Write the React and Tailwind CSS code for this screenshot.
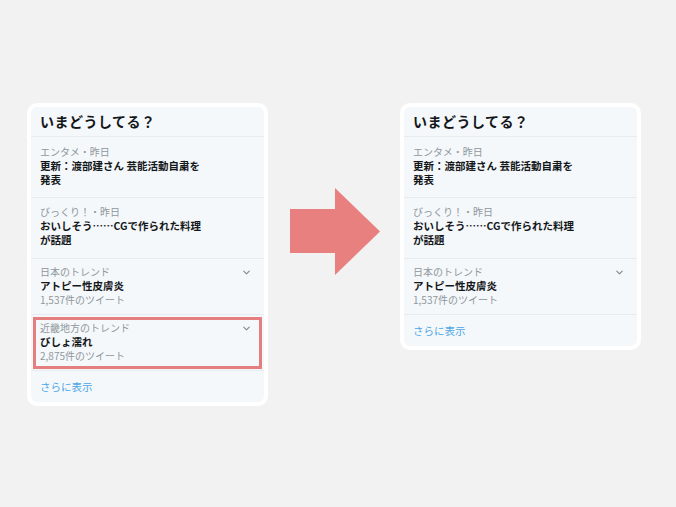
import { ChevronDown } from 'lucide-react'

const font = { fontFamily: '"Noto Sans CJK JP", "Noto Sans", sans-serif' }

function TrendItem({ category, title, count, chevron, pt = 'pt-[6px]', pb = 'pb-[7px]', boxed }) {
    return (
        <div className={`relative border-b border-[#e6ecf0] px-[9px] ${pt} ${pb}`}>
            <div className="flex items-center justify-between">
                <span className="text-[10px] leading-[14px] text-[#8f979e]">{category}</span>
                {chevron && <ChevronDown className="w-[11px] h-[11px] text-[#7f8991] mr-[3px]" strokeWidth={2.5} />}
            </div>
            <div className="text-[10.5px] leading-[14px] font-bold text-[#14171a]">{title}</div>
            {count && <div className="text-[10px] leading-[14px] text-[#8f979e]">{count}</div>}
            {boxed && (
                <div className="absolute left-[2px] right-[2px] top-[2px] bottom-[1px] border-[3px] border-[#e57f7f]" />
            )}
        </div>
    )
}

function TrendCard({ showFourth }) {
    return (
        <div className="w-[241px] rounded-[10px] border-4 border-white bg-[#f5f8fa]" style={font}>
            <div className="h-[30px] px-[9px] flex items-center border-b border-[#e6ecf0]">
                <h2 className="text-[14px] font-bold text-[#14171a] tracking-[0.5px]">いまどうしてる？</h2>
            </div>
            <TrendItem
                category="エンタメ・昨日"
                title={<>更新：渡部建さん 芸能活動自粛を<br />発表</>}
                pt="pt-[8px]"
                pb="pb-[10px]"
            />
            <TrendItem
                category="びっくり！・昨日"
                title={<>おいしそう……CGで作られた料理<br />が話題</>}
                pt="pt-[7px]"
                pb="pb-[11px]"
            />
            <TrendItem category="日本のトレンド" title="アトピー性皮膚炎" count="1,537件のツイート" chevron />
            {showFourth && (
                <TrendItem category="近畿地方のトレンド" title="びしょ濡れ" count="2,875件のツイート" chevron boxed />
            )}
            <div className="h-[31px] px-[9px] flex items-center">
                <span className="text-[10.5px] text-[#4ba6e6]">さらに表示</span>
            </div>
        </div>
    )
}

export default function App() {
    return (
        <div className="w-[676px] h-[507px] bg-[#f2f2f2] flex items-start pt-[103px] pl-[27px]">
            <TrendCard showFourth />
            <svg className="ml-[22px] mt-[85px]" width="90" height="87" viewBox="0 0 90 87">
                <polygon points="0,21 45,21 45,0 90,43.5 45,87 45,65 0,65" fill="#e88080" />
            </svg>
            <div className="ml-[20px]">
                <TrendCard />
            </div>
        </div>
    )
}
